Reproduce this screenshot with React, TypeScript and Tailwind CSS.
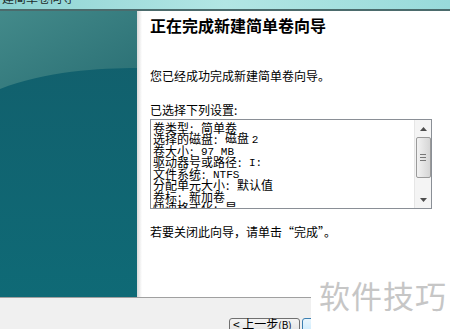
const mono = "font-['Liberation_Mono',monospace] text-[11px]";

const settings: [string, React.ReactNode][] = [
  ['卷类型', '简单卷'],
  ['选择的磁盘', <>磁盘 <span className={mono}>2</span></>],
  ['卷大小', <span className={mono}>97 MB</span>],
  ['驱动器号或路径', <span className={mono}>I:</span>],
  ['文件系统', <span className={mono}>NTFS</span>],
  ['分配单元大小', '默认值'],
  ['卷标', '新加卷'],
  ['快速格式化', '是'],
];

const cjk = "font-['Noto_Sans_CJK_SC','Noto_Sans',sans-serif]";

const SidePanel = () => (
  <div className="relative w-[137px] shrink-0 bg-[#12646f]">
    <svg width="137" height="286" viewBox="0 0 137 286" className="block">
      <defs>
        <linearGradient id="top" x1="0" y1="0" x2="1" y2="1">
          <stop offset="0" stopColor="#438a8a" />
          <stop offset="1" stopColor="#2a6f74" />
        </linearGradient>
        <linearGradient id="bottom" x1="0" y1="0" x2="0" y2="1">
          <stop offset="0" stopColor="#125e6b" />
          <stop offset="1" stopColor="#0f6a76" />
        </linearGradient>
      </defs>
      <rect x="0" y="0" width="137" height="286" fill="url(#bottom)" />
      <path d="M0 0 H137 V57 C100 57 45 60 0 78 Z" fill="url(#top)" />
    </svg>
  </div>
);

const ScrollBar = () => (
  <div className="flex w-[17px] shrink-0 flex-col items-center bg-[#f4f4f4] border-l border-[#e6e6e6]">
    <div className="flex h-[17px] w-full items-center justify-center">
      <svg width="7" height="4" viewBox="0 0 7 4">
        <path d="M0 4 L3.5 0 L7 4 Z" fill="#4d4d4d" />
      </svg>
    </div>
    <div className="flex h-[41px] w-[15px] flex-col items-center justify-center gap-[2px] rounded-[2px] border border-[#9a9a9a] bg-gradient-to-r from-[#f2f2f2] to-[#d6d6d6]">
      <div className="h-px w-[6px] bg-[#777]" />
      <div className="h-px w-[6px] bg-[#777]" />
      <div className="h-px w-[6px] bg-[#777]" />
    </div>
    <div className="flex-1" />
    <div className="flex h-[17px] w-full items-center justify-center">
      <svg width="7" height="4" viewBox="0 0 7 4">
        <path d="M0 0 L3.5 4 L7 0 Z" fill="#4d4d4d" />
      </svg>
    </div>
  </div>
);

export default function App() {
  return (
    <div className={`relative h-[329px] w-[450px] overflow-hidden bg-white text-black ${cjk}`}>
      <div className="h-[9px] overflow-hidden bg-gradient-to-r from-[#8ed3d3] via-[#b2e6e4] to-[#98dada] pl-[2px]">
        <div className="-mt-[9px] text-[12px] leading-[14px] text-[#1c2b2b]">建简单卷向导</div>
      </div>
      <div className="h-[2px] bg-[#4b6b6c]" />

      <div className="flex h-[286px]">
        <SidePanel />
        <div className="w-[5px] shrink-0 bg-gradient-to-r from-[#d9d9d9] to-white" />
        <div className="flex-1 pl-[8px] pt-[4px]">
          <h1 className="text-[16px] font-bold leading-[20px]">正在完成新建简单卷向导</h1>
          <p className="mt-[33px] text-[12px] leading-[16px]">您已经成功完成新建简单卷向导。</p>
          <p className="mt-[18px] text-[12px] leading-[16px]">已选择下列设置:</p>
          <div className="mt-px flex h-[90px] w-[282px] border border-[#8a8f96] bg-white">
            <div className="flex-1 overflow-hidden pl-[2px] pt-[2px]">
              {settings.map(([label, value]) => (
                <div key={label} className="flex h-[11.5px] items-center whitespace-pre text-[12px] leading-[12px]">
                  <span>{label}</span>
                  <span className="inline-block w-[12px] pl-[1px]">:</span>
                  <span>{value}</span>
                </div>
              ))}
            </div>
            <ScrollBar />
          </div>
          <p className="mt-[15px] text-[12px] leading-[16px]">若要关闭此向导，请单击“完成”。</p>
        </div>
      </div>

      <div className="h-[32px] border-t border-[#a0a0a0] bg-[#f0f0f0] pl-[229px] pt-[20px]">
        <div className="flex gap-[2px]">
          <button className="flex h-[20px] w-[71px] items-start rounded-[3px] border border-[#707070] bg-gradient-to-b from-[#f4f4f4] to-[#dcdcdc] pl-[3px] text-[12px] leading-[8px]">
            <span className="pt-[1px]">&lt; 上一步<span className="text-[10px]">(B)</span></span>
          </button>
          <button className="h-[20px] w-[71px] rounded-[3px] border border-[#3c7fb1] bg-gradient-to-b from-[#eaf6fd] to-[#bee6fd]" />
        </div>
      </div>

      <div className="absolute bottom-0 right-0 top-[278px] left-[311px] flex items-start bg-white pl-[8px]">
        <span className="text-[31px] leading-[34px] tracking-[1px] text-[#c6c6c6]">软件技巧</span>
      </div>
    </div>
  );
}
